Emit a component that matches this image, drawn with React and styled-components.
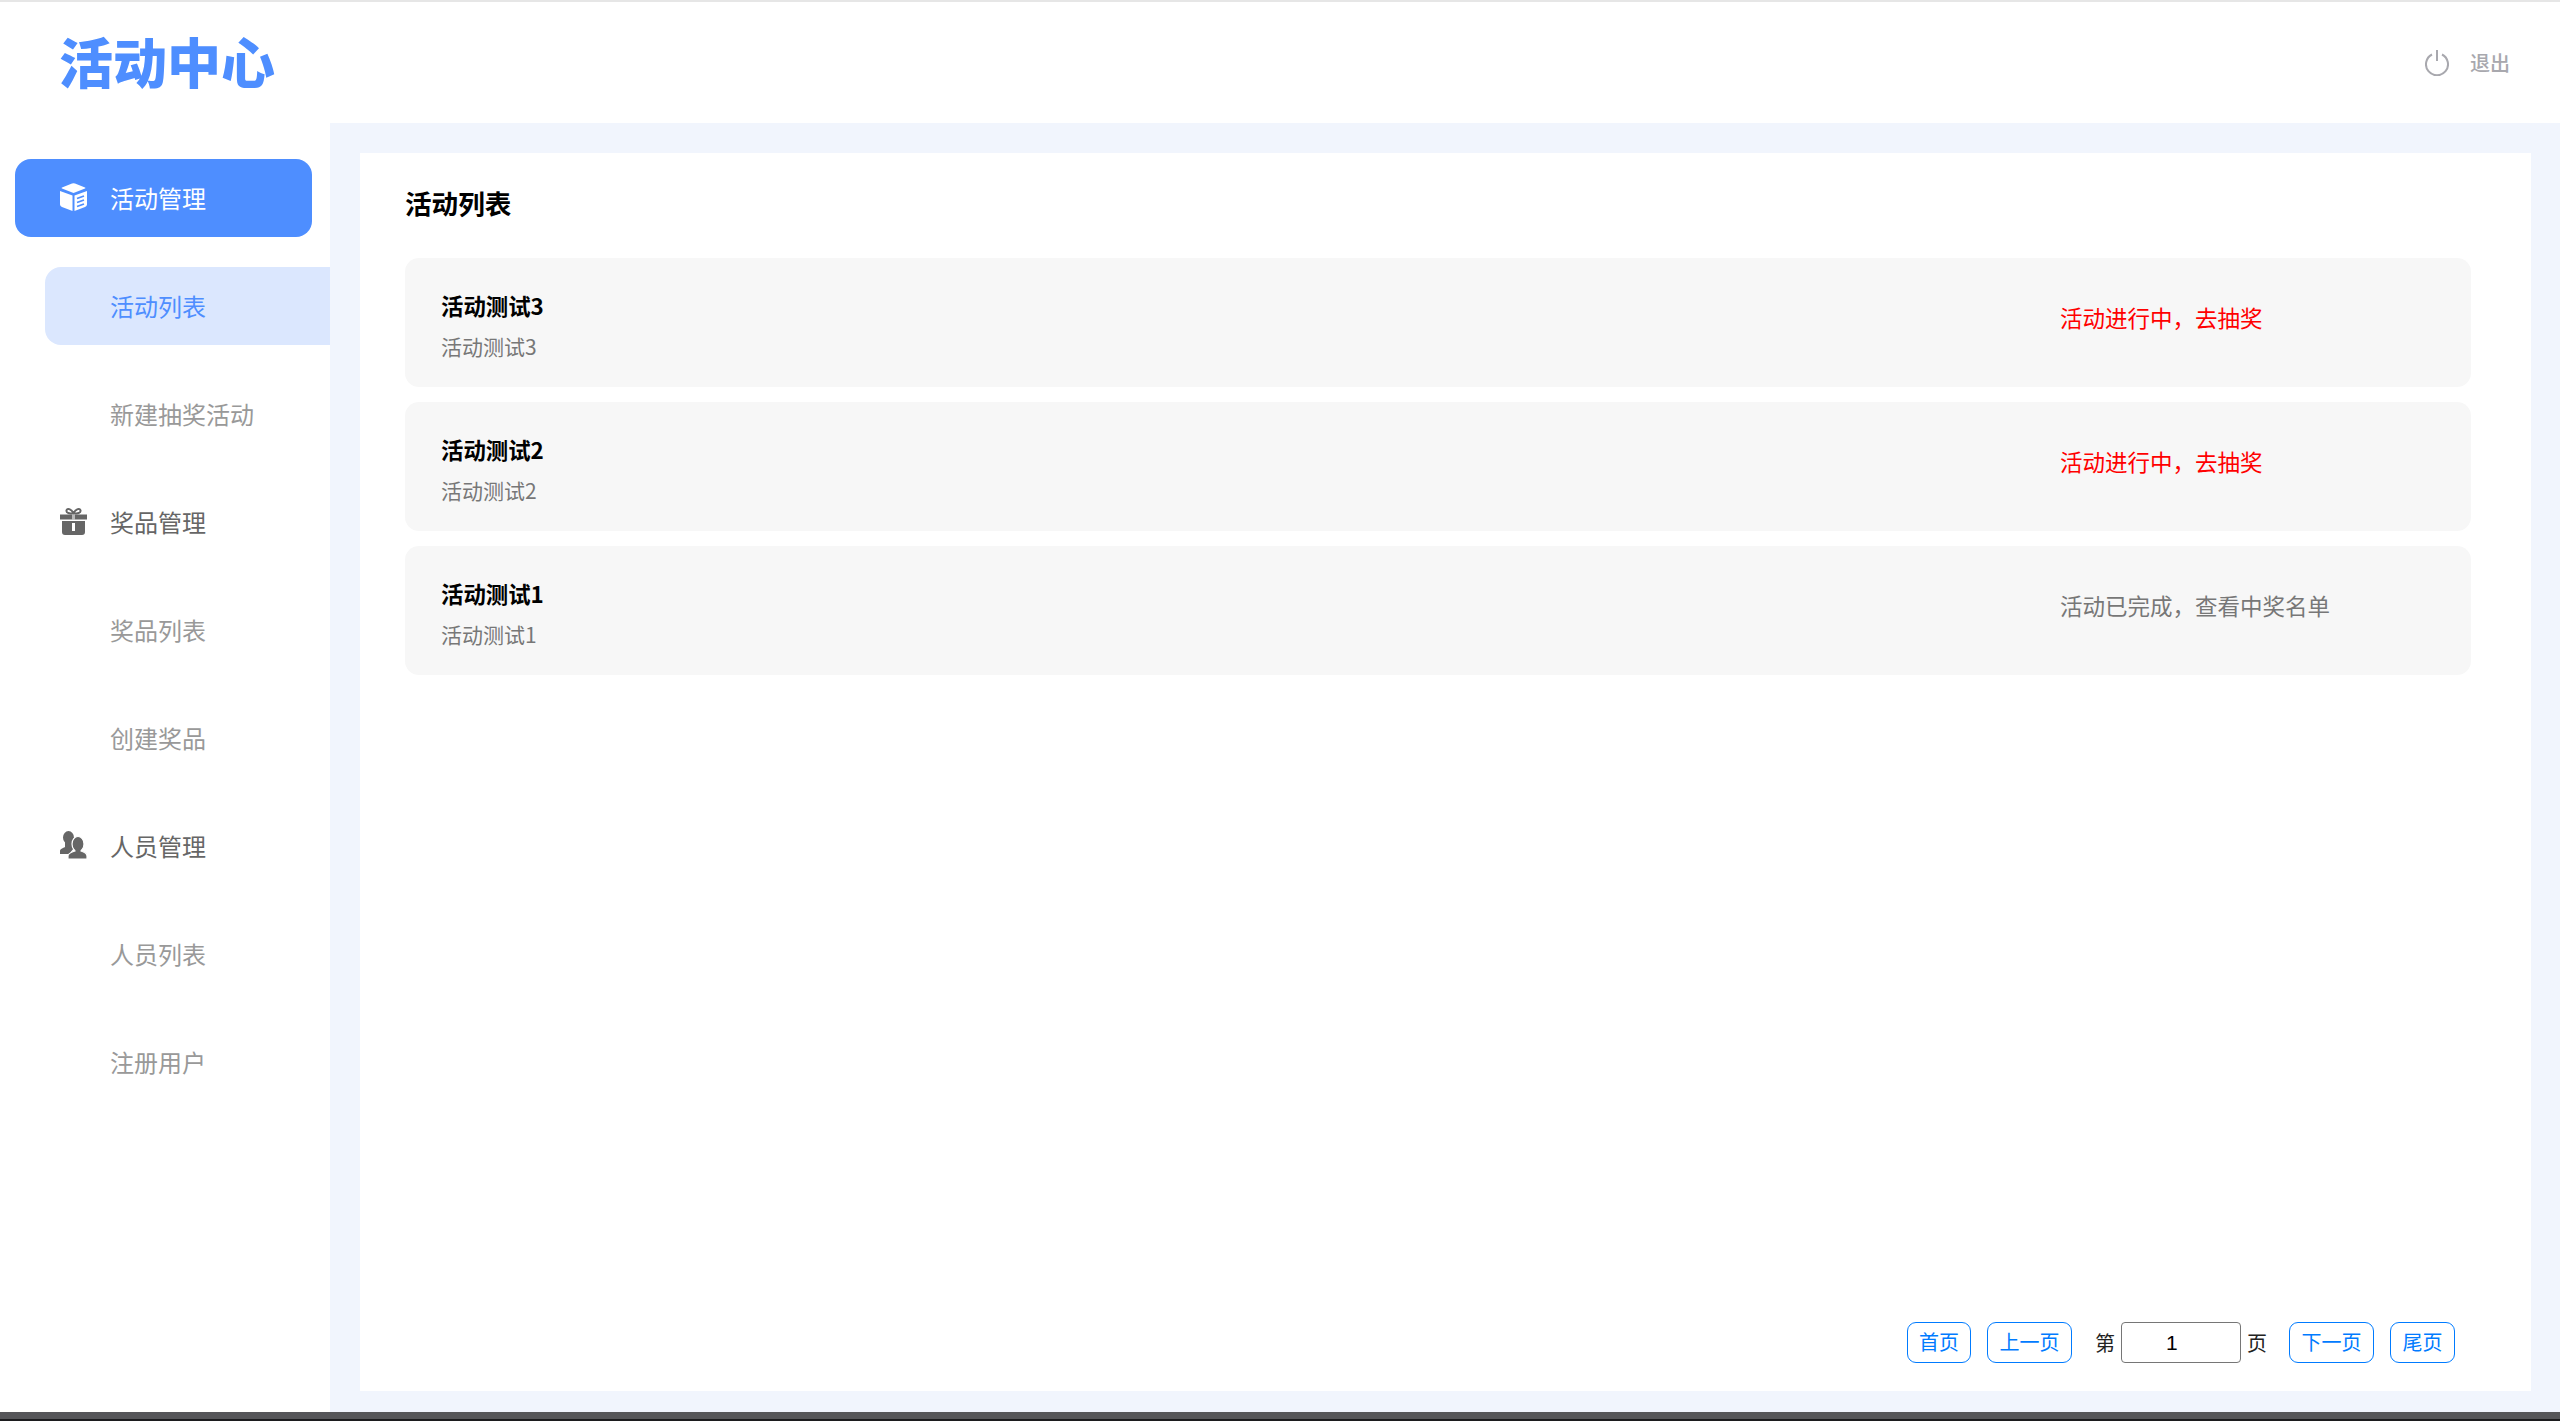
import React from "react";
import styled, { createGlobalStyle } from "styled-components";

const FONT = `"Noto Sans CJK SC", "Liberation Sans", sans-serif`;

const GlobalStyle = createGlobalStyle`
  html, body {
    margin: 0;
    padding: 0;
    background: #fff;
    font-family: ${FONT};
  }
  * {
    box-sizing: border-box;
  }
`;

const Page = styled.div`
  display: flex;
  flex-direction: column;
  height: 100vh;
  overflow: hidden;
`;

const Header = styled.header`
  flex: 0 0 123px;
  display: flex;
  align-items: center;
  justify-content: space-between;
  padding: 0 50px 0 59px;
  border-top: 2px solid #e6e6e6;
`;

const Logo = styled.div`
  font-size: 54px;
  line-height: 54px;
  font-weight: 900;
  color: #4e8eff;
  white-space: nowrap;
  margin-top: -3px;
`;

const Logout = styled.div`
  display: flex;
  align-items: center;
  gap: 21px;
  font-size: 20px;
  font-weight: 500;
  color: #a8a8ae;
`;

const Body = styled.div`
  flex: 1;
  display: flex;
  min-height: 0;
`;

const Sidebar = styled.nav`
  flex: 0 0 330px;
  display: flex;
  flex-direction: column;
  gap: 30px;
  padding-top: 36px;
`;

const NavItem = styled.div`
  display: flex;
  align-items: center;
  gap: 23px;
  height: 78px;
  margin-left: ${(p) => (p.$sub ? "45px" : "15px")};
  margin-right: ${(p) => (p.$sub ? "0" : "18px")};
  padding: ${(p) => (p.$sub ? "0 0 2px 65px" : "0 0 2px 45px")};
  border-radius: ${(p) => (p.$sub ? "16px 0 0 16px" : "16px")};
  font-size: 24px;
  color: ${(p) =>
    p.$current ? (p.$sub ? "#4e8eff" : "#fff") : p.$sub ? "#999" : "#666"};
  background: ${(p) =>
    p.$current ? (p.$sub ? "#dbe7fe" : "#4e8eff") : "transparent"};
`;

const Main = styled.main`
  flex: 1;
  display: flex;
  padding: 30px 29px 21px 30px;
  background: #f1f5fd;
  min-width: 0;
`;

const Panel = styled.section`
  flex: 1;
  display: flex;
  flex-direction: column;
  padding: 0 60px 0 45px;
  background: #fff;
`;

const Title = styled.h1`
  margin: 0;
  padding-top: 30px;
  height: 105px;
  font-size: 26.6px;
  line-height: 40px;
  font-weight: 700;
  color: #000;
`;

const List = styled.div`
  flex: 1;
  display: flex;
  flex-direction: column;
  gap: 15px;
`;

const Row = styled.article`
  display: flex;
  justify-content: space-between;
  height: 129px;
  padding: 31px 0 0 36px;
  background: #f7f7f7;
  border-radius: 14px;
`;

const RowName = styled.div`
  font-size: 22.4px;
  line-height: 32px;
  font-weight: 700;
  color: #000;
`;

const RowDesc = styled.div`
  margin-top: 9px;
  font-size: 21px;
  line-height: 32px;
  color: #777;
`;

const RowStatus = styled.div`
  flex: 0 0 411px;
  margin-top: 12px;
  font-size: 22.5px;
  line-height: 32px;
  color: ${(p) => (p.$running ? "#ff0000" : "#777")};
`;

const Pager = styled.div`
  display: flex;
  align-items: center;
  justify-content: flex-end;
  height: 41px;
  margin: 0 16px 28px 0;
  font-size: 20px;
  color: #222;
`;

const PageButton = styled.button`
  height: 41px;
  padding: 0 0 2px;
  width: ${(p) => p.$width || "65px"};
  margin-left: ${(p) => p.$before || "0"};
  margin-right: ${(p) => p.$after || "16px"};
  border: 1.5px solid #007bff;
  border-radius: 9px;
  background: #fff;
  color: #007bff;
  font-family: ${FONT};
  font-size: 20px;
`;

const PageInput = styled.input`
  width: 120px;
  height: 41px;
  margin: 0 6px 0 6px;
  padding: 0 0 0 44px;
  border: 1px solid #767676;
  border-radius: 4px;
  color: #000;
  font-family: "Liberation Sans", sans-serif;
  font-size: 21px;
`;

const BottomBar = styled.div`
  flex: 0 0 9px;
  background: linear-gradient(#565659 0 7px, #1c1c1e 7px);
`;

const IconBox = styled.svg`
  flex: 0 0 27px;
  width: 27px;
  height: 28px;
  display: block;
`;

const PowerIcon = () => (
  <svg width="24" height="26" viewBox="0 0 24 26" fill="none" stroke="#a8a8ae" strokeWidth="2">
    <path d="M7 4.500A11 11 0 1 0 17 4.500" />
    <path d="M12 0v11" />
  </svg>
);

const BoxIcon = () => (
  <IconBox viewBox="0 0 27 28">
    <path fill="#fff" d="M12 .5q1.500-.5 3 0l10 4q1 .5 0 1l-11.500 4.500L2 5.500q-1-.5 0-1z" />
    <path fill="#fff" d="M0 8l12.500 4.500V28L2 24a3 3 0 0 1-2-3z" />
    <path fill="#fff" d="M27 8l-12.500 4.500V28L25 24a3 3 0 0 0 2-3z" />
    <path stroke="#4e8eff" strokeWidth="1.800" fill="none" d="M17 15.500l7-2.500M17 19.500l7-2.500M17 23.500l7-2.500" />
  </IconBox>
);

const GiftIcon = () => (
  <IconBox viewBox="0 0 27 28">
    <path fill="none" stroke="#666" strokeWidth="2" d="M13.500 6C11 1.500 7 1 6.500 3.500s3 3 7 3c4 0 7.500-.5 7-3s-4.500-2-7 2.500z" />
    <path fill="#666" d="M0 7.500h27v5H0zM2 14h23v11a3 3 0 0 1-3 3H5a3 3 0 0 1-3-3z" />
    <path fill="#fff" d="M12 16h3v8h-3z" />
    <path fill="#fff" d="M12 7.500h3v5h-3z" opacity=".55" />
  </IconBox>
);

const UsersIcon = () => (
  <IconBox viewBox="0 0 27 28">
    <ellipse cx="8.500" cy="6.500" rx="5.500" ry="6.500" fill="#666" />
    <path fill="#666" d="M0 23v-3c0-2 3-3 5-4v-5h7v5l2 1-5 6z" />
    <g stroke="#fff" strokeWidth="1.200" fill="#666">
      <path d="M8 28v-3c0-3 4-4 7-5v-4h6v4c3 1 6 2 6 5v3z" />
      <ellipse cx="18" cy="13" rx="6" ry="7.500" />
    </g>
    <path fill="#666" d="M15.500 15h5v7h-5z" />
  </IconBox>
);

const nav = [
  { label: "活动管理", icon: <BoxIcon />, current: true },
  { label: "活动列表", sub: true, current: true },
  { label: "新建抽奖活动", sub: true },
  { label: "奖品管理", icon: <GiftIcon /> },
  { label: "奖品列表", sub: true },
  { label: "创建奖品", sub: true },
  { label: "人员管理", icon: <UsersIcon /> },
  { label: "人员列表", sub: true },
  { label: "注册用户", sub: true },
];

const activities = [
  { id: 3, name: "活动测试3", running: true },
  { id: 2, name: "活动测试2", running: true },
  { id: 1, name: "活动测试1", running: false },
];

const App = () => {
  return (
    <Page>
      <GlobalStyle />
      <Header>
        <Logo>活动中心</Logo>
        <Logout>
          <PowerIcon />
          退出
        </Logout>
      </Header>
      <Body>
        <Sidebar>
          {nav.map(({ label, icon, sub, current }) => (
            <NavItem key={label} $sub={sub} $current={current}>
              {icon}
              {label}
            </NavItem>
          ))}
        </Sidebar>
        <Main>
          <Panel>
            <Title>活动列表</Title>
            <List>
              {activities.map(({ id, name, running }) => (
                <Row key={id}>
                  <div>
                    <RowName>{name}</RowName>
                    <RowDesc>{name}</RowDesc>
                  </div>
                  <RowStatus $running={running}>
                    {running ? "活动进行中，去抽奖" : "活动已完成，查看中奖名单"}
                  </RowStatus>
                </Row>
              ))}
            </List>
            <Pager>
              <PageButton $width="64px">首页</PageButton>
              <PageButton $width="85px" $after="23px">上一页</PageButton>
              第
              <PageInput defaultValue="1" />
              页
              <PageButton $width="85px" $before="22px">下一页</PageButton>
              <PageButton $after="0">尾页</PageButton>
            </Pager>
          </Panel>
        </Main>
      </Body>
      <BottomBar />
    </Page>
  );
};

export default App;
